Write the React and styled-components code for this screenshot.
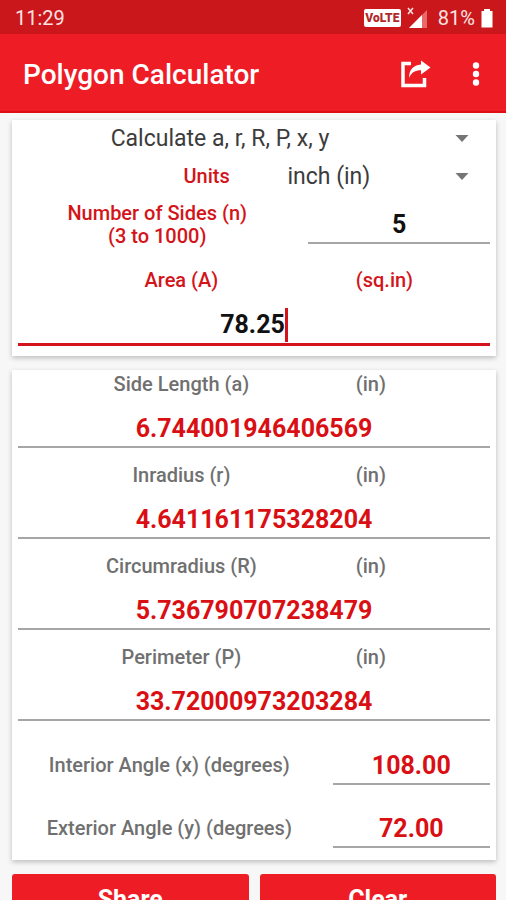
import React, { useState } from "react";
import styled, { createGlobalStyle } from "styled-components";

const GlobalStyle = createGlobalStyle`
  * { box-sizing: border-box; }
  html { scrollbar-width: none; }
  body {
    margin: 0;
    background: #f7f7f7;
    font-family: Roboto, "Liberation Sans", sans-serif;
    color: #1a1a1a;
  }
`;

const Screen = styled.div`
  min-height: 100vh;
`;

const StatusBar = styled.div`
  display: flex;
  align-items: center;
  justify-content: space-between;
  height: 34px;
  padding: 2px 13px 0 15px;
  background: #c9171b;
  color: #fde3e3;
  font-size: 20px;
`;

const StatusIcons = styled.div`
  display: flex;
  align-items: center;
`;

const LteBadge = styled.span`
  width: 37px;
  margin-right: 6px;
  border-radius: 2px;
  background: #ffffff;
  color: #b3282a;
  font-size: 12px;
  font-weight: 900;
  line-height: 18px;
  text-align: center;
`;

const Signal = styled.svg`
  width: 22px;
  height: 22px;
  margin-right: 9px;
`;

const Battery = styled.svg`
  width: 12px;
  height: 19px;
  margin-left: 6px;
`;

const AppBar = styled.header`
  display: flex;
  align-items: center;
  height: 79px;
  padding: 2px 22px 0 23px;
  background: #ee1c25;
  border-bottom: 2px solid #e00d12;
  color: #ffffff;
`;

const Title = styled.h1`
  flex: 1;
  margin: 0;
  padding-top: 2px;
  font-size: 28px;
  font-weight: 500;
  line-height: 32px;
`;

const IconButton = styled.button`
  display: flex;
  padding: 0;
  border: 0;
  background: none;
  color: inherit;
  margin-left: ${(p) => p.$gap || 0}px;
`;

const Content = styled.main`
  display: grid;
  gap: 14px;
  padding: 7px 10px 14px 12px;
`;

const Card = styled.section`
  background: #ffffff;
  box-shadow: 0 2px 5px rgba(0, 0, 0, 0.24);
  padding-bottom: ${(p) => p.$bottom || 0}px;
`;

const Row = styled.div`
  display: grid;
  grid-template-columns: ${(p) => p.$columns};
  align-items: center;
  min-height: ${(p) => p.$height}px;
`;

const Label = styled.label`
  color: ${(p) => (p.$accent ? "#d3141a" : "#707070")};
  font-size: 20px;
  font-weight: 500;
  line-height: 23px;
  text-align: ${(p) => p.$align || "center"};
`;

const Unit = styled(Label).attrs({ as: "span" })`
  padding-left: 5px;
  text-align: left;
`;

const SelectBox = styled.div`
  display: grid;
  align-items: center;
  > * { grid-area: 1 / 1; }
`;

const Select = styled.select`
  appearance: none;
  width: 100%;
  height: 37px;
  padding: 0 68px 0 0;
  border: 0;
  background: transparent;
  color: #3c3c3c;
  font: 400 23px/37px Roboto, "Liberation Sans", sans-serif;
  text-align: center;
  text-align-last: center;
`;

const Arrow = styled.svg`
  justify-self: end;
  width: 14px;
  height: 7px;
  margin-right: 27px;
  pointer-events: none;
`;

const Field = styled.div`
  display: flex;
  align-items: center;
  justify-content: center;
  height: ${(p) => (p.$focused ? 40 : 38)}px;
  margin: 0 6px;
  padding-top: ${(p) => (p.$focused ? 0 : 2)}px;
  border-bottom: ${(p) => (p.$focused ? "3px solid #d3141a" : "2px solid #a6a6a6")};
`;

const Input = styled.input`
  min-width: 0;
  width: 100%;
  padding: 0;
  border: 0;
  outline: 0;
  background: transparent;
  color: ${(p) => (p.$result ? "#d90f14" : "#111111")};
  font: 700 25px/34px Roboto, "Liberation Sans", sans-serif;
  text-align: center;
`;

const ActiveInput = styled(Input)`
  width: auto;
  field-sizing: content;
  caret-color: transparent;
`;

const Caret = styled.span`
  width: 3px;
  height: 34px;
  background: #d3141a;
`;

const Result = styled.div`
  display: grid;
  gap: 12px;
  margin-bottom: 13px;
`;

const Actions = styled.div`
  display: grid;
  grid-template-columns: 1fr 1fr;
  gap: 11px;
`;

const ActionButton = styled.button`
  height: 52px;
  padding: 0;
  border: 0;
  border-radius: 3px;
  background: #ee1c25;
  color: #ffffff;
  font: 700 25px/52px Roboto, "Liberation Sans", sans-serif;
`;

const results = [
  { id: "side", label: "Side Length (a)", value: "6.744001946406569" },
  { id: "inradius", label: "Inradius (r)", value: "4.641161175328204" },
  { id: "circumradius", label: "Circumradius (R)", value: "5.736790707238479" },
  { id: "perimeter", label: "Perimeter (P)", value: "33.72000973203284" },
];

const angles = [
  { id: "interior", label: "Interior Angle (x) (degrees)", value: "108.00" },
  { id: "exterior", label: "Exterior Angle (y) (degrees)", value: "72.00" },
];

function Dropdown({ id, label, options }) {
  return (
    <SelectBox>
      <Select id={id} aria-label={label}>
        {options.map((o) => (
          <option key={o}>{o}</option>
        ))}
      </Select>
      <Arrow viewBox="0 0 14 7" aria-hidden="true">
        <path d="M0.500 0h13L7 7z" fill="#757575" />
      </Arrow>
    </SelectBox>
  );
}

export default function App() {
  const [sides, setSides] = useState("5");
  const [area, setArea] = useState("78.25");

  return (
    <Screen>
      <GlobalStyle />
      <StatusBar>
        <span>11:29</span>
        <StatusIcons>
          <LteBadge>VoLTE</LteBadge>
          <Signal viewBox="0 0 22 22" aria-hidden="true">
            <path d="M20 3v18H2z" fill="#e8686b" />
            <path d="M15 8v13H2z" fill="#ffffff" />
            <path d="M1 1l5 6M6 1L1 7" stroke="#fde3e3" strokeWidth="1.5" />
          </Signal>
          <span>81%</span>
          <Battery viewBox="0 0 12 19" aria-hidden="true">
            <path d="M3 0h6v2h2.500v16.500H0.500V2H3z" fill="#ffffff" />
          </Battery>
        </StatusIcons>
      </StatusBar>
      <AppBar>
        <Title>Polygon Calculator</Title>
        <IconButton aria-label="Share">
          <svg width="32" height="28" viewBox="0 0 32 28" fill="none">
            <path
              d="M12 3.500H4V25.500H25.500V18"
              stroke="currentColor"
              strokeWidth="3.500"
            />
            <path
              d="M22 0.500l9.500 7-9.500 7v-4.200c-6 0-9.500 2.200-12 7.700 0-8 4-13 12-13.500z"
              fill="currentColor"
            />
          </svg>
        </IconButton>
        <IconButton aria-label="More options" $gap={37}>
          <svg width="16" height="24" viewBox="0 0 16 24" fill="currentColor">
            <circle cx="8" cy="3.500" r="3.200" />
            <circle cx="8" cy="12" r="3.200" />
            <circle cx="8" cy="20.500" r="3.200" />
          </svg>
        </IconButton>
      </AppBar>
      <Content>
        <Card $bottom={10}>
          <Dropdown
            id="mode"
            label="Calculation"
            options={["Calculate a, r, R, P, x, y"]}
          />
          <Row $columns="45% 55%" $height={38}>
            <Label $accent $align="right" htmlFor="units">
              Units
            </Label>
            <Dropdown id="units" label="Units" options={["inch (in)"]} />
          </Row>
          <Row $columns="60% 40%" $height={60}>
            <Label $accent htmlFor="sides">
              Number of Sides (n)
              <br />
              (3 to 1000)
            </Label>
            <Field>
              <Input
                id="sides"
                value={sides}
                onChange={(e) => setSides(e.target.value)}
              />
            </Field>
          </Row>
          <Row $columns="70% 30%" $height={51}>
            <Label $accent htmlFor="area">
              Area (A)
            </Label>
            <Unit $accent>(sq.in)</Unit>
          </Row>
          <Field $focused>
            <ActiveInput
              id="area"
              value={area}
              onChange={(e) => setArea(e.target.value)}
            />
            <Caret />
          </Field>
        </Card>
        <Card>
          {results.map((r) => (
            <Result key={r.id}>
              <Row $columns="70% 30%" $height={28}>
                <Label htmlFor={r.id}>{r.label}</Label>
                <Unit>(in)</Unit>
              </Row>
              <Field>
                <Input id={r.id} $result readOnly value={r.value} />
              </Field>
            </Result>
          ))}
          {angles.map((a) => (
            <Row key={a.id} $columns="65% 35%" $height={63}>
              <Label htmlFor={a.id}>{a.label}</Label>
              <Field>
                <Input id={a.id} $result readOnly value={a.value} />
              </Field>
            </Row>
          ))}
        </Card>
        <Actions>
          <ActionButton>Share</ActionButton>
          <ActionButton>Clear</ActionButton>
        </Actions>
      </Content>
    </Screen>
  );
}
